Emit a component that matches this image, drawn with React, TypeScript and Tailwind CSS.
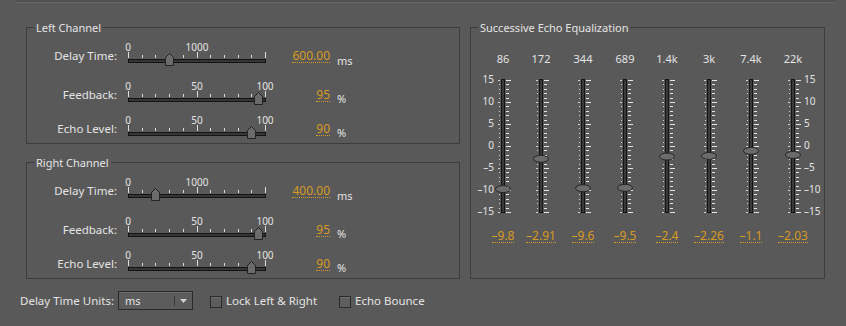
import React from "react";

const ORANGE = "text-[#d59b24] border-[#d59b24]";

type Mark = { text: string; pos: string };

const delayMarks: Mark[] = [
  { text: "0", pos: "left-[4px]" },
  { text: "1000", pos: "left-[73px]" },
];

const pctMarks: Mark[] = [
  { text: "0", pos: "left-[4px]" },
  { text: "50", pos: "left-[73px]" },
  { text: "100", pos: "left-[141px]" },
];

function HSlider({ frac, marks }: { frac: number; marks: Mark[] }) {
  const cx = Math.round(4 + frac * 137) + 0.5;
  const ticks = Array.from({ length: 11 }, (_, i) => Math.round(4 + i * 13.7));
  return (
    <div className="w-[146px] shrink-0">
      <div className="relative h-[10px] text-[10px] leading-[10px]">
        {marks.map((m) => (
          <span key={m.text} className={`absolute top-0 -translate-x-1/2 ${m.pos}`}>
            {m.text}
          </span>
        ))}
      </div>
      <svg width="146" height="15" className="block">
        {ticks.map((x, i) => {
          const major = i === 0 || i === 5 || i === 10;
          return (
            <rect key={i} x={x} y={major ? 0 : 3} width="1" height={major ? 6 : 3} fill="#dcdcdc" />
          );
        })}
        <rect x="4" y="7" width="138" height="4" fill="#141414" />
        <rect x="5" y="8" width="136" height="2" fill="#363636" />
        <polygon
          points={`${cx - 4},13.5 ${cx - 4},5.5 ${cx},1.5 ${cx + 4},5.5 ${cx + 4},13.5`}
          fill="#6b6b6b"
          stroke="#222222"
        />
      </svg>
    </div>
  );
}

function SliderRow({
  label,
  frac,
  marks,
  value,
  unit,
  h,
}: {
  label: string;
  frac: number;
  marks: Mark[];
  value: string;
  unit: string;
  h: string;
}) {
  return (
    <div className={`flex items-start ${h}`}>
      <div className="mt-[7px] w-[90px] text-right text-[11.5px] leading-[13px]">{label}</div>
      <div className="ml-[7px]">
        <HSlider frac={frac} marks={marks} />
      </div>
      <div className="mt-[7px] flex w-[60px] justify-end">
        <span className={`block border-b border-dotted text-[12px] leading-[13px] ${ORANGE}`}>
          {value}
        </span>
      </div>
      <div className={`ml-[7px] text-[11px] leading-[13px] ${unit === "ms" ? "mt-[12px]" : "mt-[11px]"}`}>
        {unit}
      </div>
    </div>
  );
}

function Channel({ title, delay, delayValue }: { title: string; delay: number; delayValue: string }) {
  return (
    <fieldset className="border border-[#3d3d3d]">
      <legend className="ml-[7px] px-[2px] text-[11px] leading-[13px]">{title}</legend>
      <div className="pt-[8px]">
        <SliderRow label="Delay Time:" frac={delay} marks={delayMarks} value={delayValue} unit="ms" h="h-[39px]" />
        <SliderRow label="Feedback:" frac={0.95} marks={pctMarks} value="95" unit="%" h="h-[34px]" />
        <SliderRow label="Echo Level:" frac={0.9} marks={pctMarks} value="90" unit="%" h="h-[28px]" />
      </div>
    </fieldset>
  );
}

const bands = [
  { f: "86", v: -9.8, t: "–9.8" },
  { f: "172", v: -2.91, t: "–2.91" },
  { f: "344", v: -9.6, t: "–9.6" },
  { f: "689", v: -9.5, t: "–9.5" },
  { f: "1.4k", v: -2.4, t: "–2.4" },
  { f: "3k", v: -2.26, t: "–2.26" },
  { f: "7.4k", v: -1.1, t: "–1.1" },
  { f: "22k", v: -2.03, t: "–2.03" },
];

const dbMarks = ["15", "10", "5", "0", "–5", "–10", "–15"];

function Fader({ value }: { value: number }) {
  const y = (d: number) => 4 + (15 - d) * 4.4;
  const steps = Array.from({ length: 31 }, (_, i) => 15 - i);
  return (
    <svg width="16" height="140" className="block overflow-visible">
      {steps.map((d) => {
        const ty = Math.round(y(d));
        const major = d % 5 === 0;
        return (
          <g key={d}>
            <rect x={major ? 3 : 4} y={ty} width={major ? 2 : 1} height="1" fill="#d2d2d2" />
            <rect x="11" y={ty} width={major ? 5 : 3} height="1" fill="#e4e4e4" />
          </g>
        );
      })}
      <rect x="6" y="3" width="4" height="134" fill="#141414" />
      <rect x="7" y="4" width="2" height="132" fill="#3a3a3a" />
      <ellipse cx="8" cy={y(value)} rx="7.5" ry="3.5" fill="#6b6b6b" stroke="#262626" />
    </svg>
  );
}

function DbScale({ align }: { align: string }) {
  return (
    <div className={`flex h-[145px] flex-col justify-between text-[10px] leading-[13px] ${align}`}>
      {dbMarks.map((m) => (
        <span key={m}>{m}</span>
      ))}
    </div>
  );
}

function Equalizer() {
  return (
    <fieldset className="w-[355px] border border-[#3d3d3d]">
      <legend className="ml-[7px] px-[2px] text-[11px] leading-[13px]">Successive Echo Equalization</legend>
      <div className="flex pl-[11px] pt-[18px]">
        {bands.map((b, i) => (
          <div key={b.f} className={`w-[42px] text-center text-[11px] leading-[13px] ${i === 0 ? "-mr-[4px]" : ""}`}>
            {b.f}
          </div>
        ))}
      </div>
      <div className="mt-[8px] flex items-start">
        <div className="w-[24px] pr-[1px]">
          <DbScale align="text-right" />
        </div>
        {bands.map((b, i) => (
          <div key={b.f} className={`mt-[3px] ${i === 0 ? "" : i === 1 ? "ml-[22px]" : "ml-[26px]"}`}>
            <Fader value={b.v} />
          </div>
        ))}
        <div className="ml-[3px]">
          <DbScale align="text-left" />
        </div>
      </div>
      <div className="mt-[11px] flex pl-[11px]">
        {bands.map((b, i) => (
          <div key={b.f} className={`flex w-[42px] justify-center ${i === 0 ? "-mr-[4px]" : ""}`}>
            <span className={`block border-b border-dotted text-[12px] leading-[13px] ${ORANGE}`}>{b.t}</span>
          </div>
        ))}
      </div>
    </fieldset>
  );
}

function Checkbox({ label, w }: { label: string; w: string }) {
  return (
    <div className="flex items-center">
      <div className="mt-[3px] h-[12px] w-[12px] border border-[#2a2a2a] bg-[#5e5e5e] shadow-[inset_0_1px_0_#717171]" />
      <span className={`ml-[4px] whitespace-nowrap ${w}`}>{label}</span>
    </div>
  );
}

export default function App() {
  return (
    <div className="h-[326px] w-[846px] overflow-hidden bg-[#595959] font-['Noto_Sans',sans-serif] text-[#e4e4e4]">
      <div className="ml-[15px] h-[3px] w-[820px] border-b border-[#666666] bg-[#505050]" />
      <div className="ml-[26px] mt-[18px] flex gap-[10px]">
        <div className="flex w-[434px] flex-col gap-[12px]">
          <Channel title="Left Channel" delay={0.3} delayValue="600.00" />
          <Channel title="Right Channel" delay={0.2} delayValue="400.00" />
        </div>
        <Equalizer />
      </div>
      <div className="mt-[12px] flex h-[19px] items-center pl-[20px] text-[11.5px] leading-[14px]">
        <span className="w-[98px] whitespace-nowrap">Delay Time Units:</span>
        <div className="flex h-[19px] w-[75px] items-center border border-[#2a2a2a] bg-[#5c5c5c] shadow-[inset_0_1px_0_#6c6c6c]">
          <span className="w-[55px] pl-[6px] text-[11px]">ms</span>
          <div className="h-[10px] w-px bg-[#3a3a3a]" />
          <div className="flex w-[17px] justify-center">
            <svg width="7" height="4" className="block">
              <polygon points="0,0 7,0 3.5,4" fill="#cfcfcf" />
            </svg>
          </div>
        </div>
        <div className="ml-[17px]">
          <Checkbox label="Lock Left & Right" w="w-[113px]" />
        </div>
        <Checkbox label="Echo Bounce" w="" />
      </div>
    </div>
  );
}
